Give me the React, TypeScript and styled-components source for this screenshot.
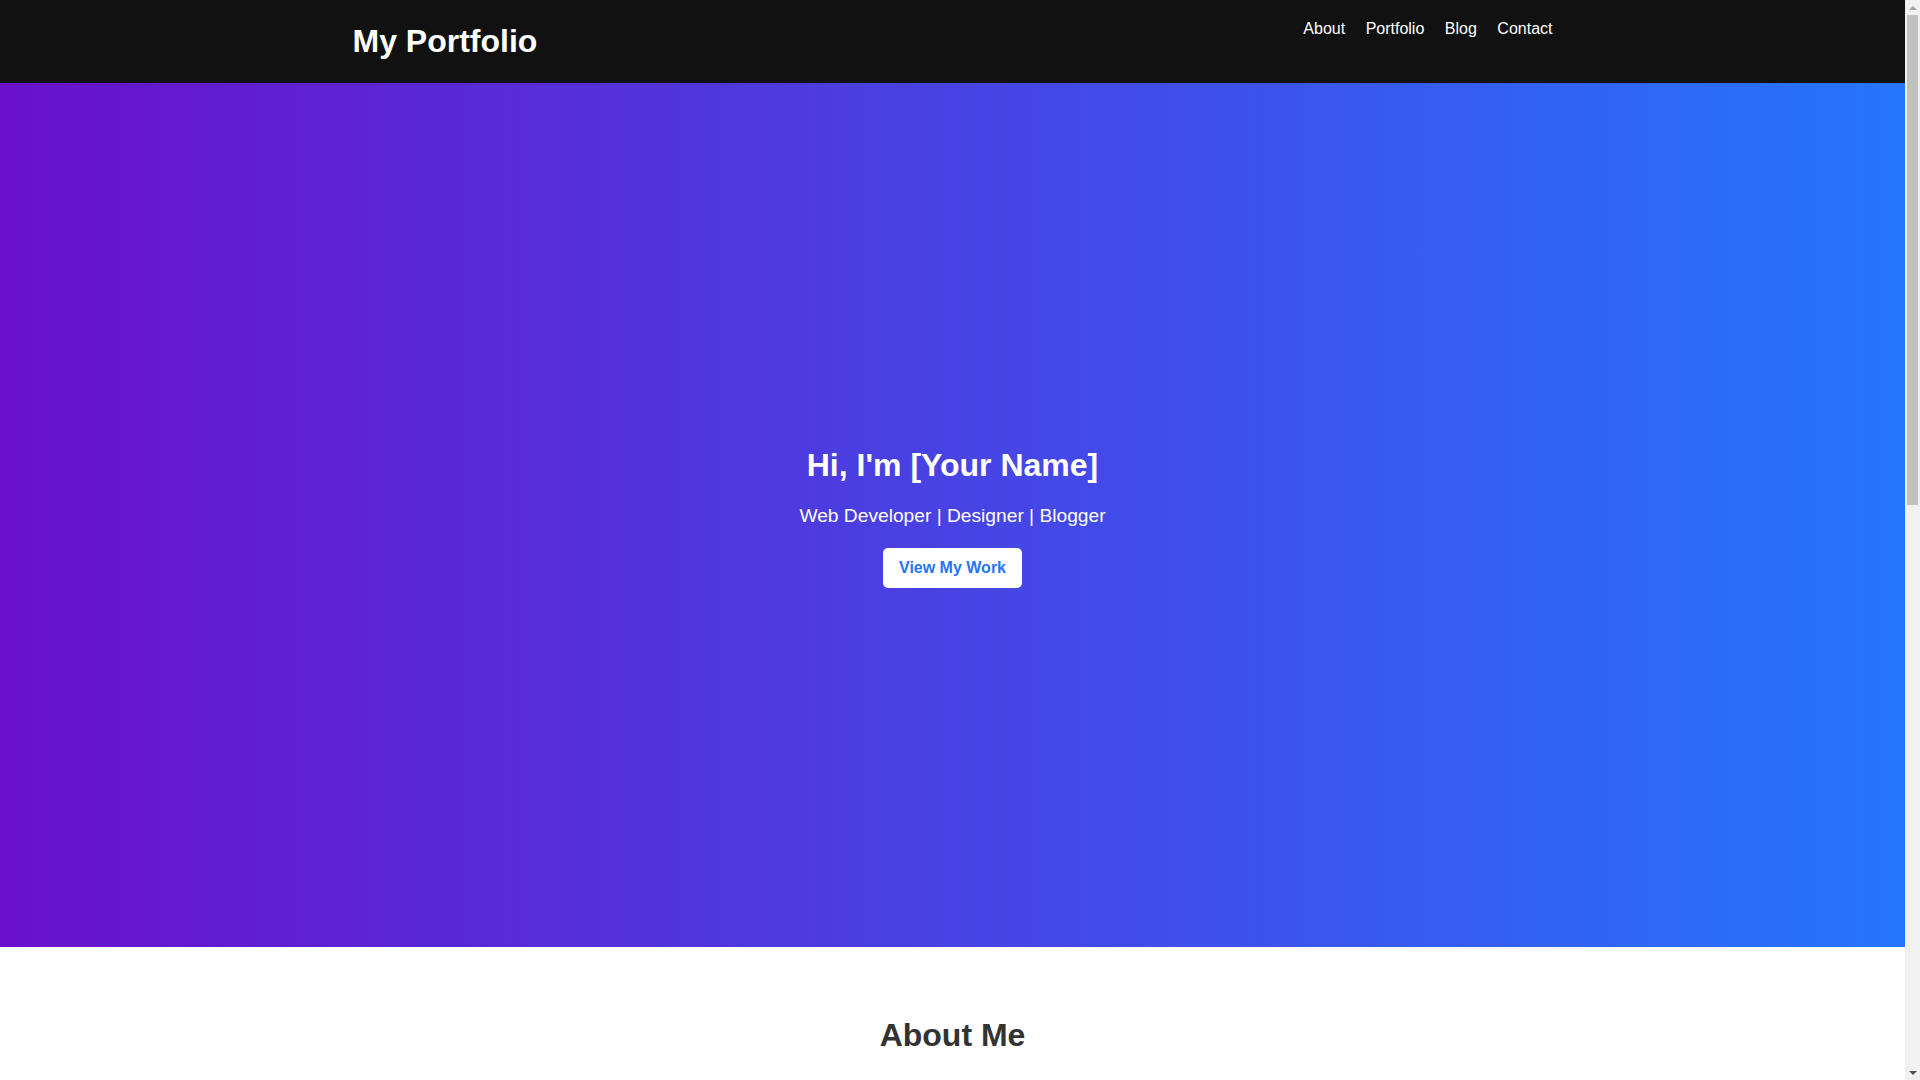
import React from 'react';
import styled, { createGlobalStyle } from 'styled-components';

const GlobalStyle = createGlobalStyle`
  body {
    margin: 0 15px 0 0;
    font-family: 'Liberation Sans', Arial, sans-serif;
    color: #333;
    background: #fff;
  }
`;

/* fake classic scrollbar, the reference was shot with one */
const ScrollBar = styled.div`
	position: fixed;
	top: 0;
	right: 0;
	width: 15px;
	height: 100vh;
	background: #f1f1f1;
	display: flex;
	flex-direction: column;
	align-items: center;
	z-index: 10;
`;

const ArrowBox = styled.div`
	height: 15px;
	width: 15px;
	display: flex;
	align-items: center;
	justify-content: center;
`;

const Arrow = styled.div<{ dir: 'up' | 'down' }>`
	width: 0;
	height: 0;
	border-left: 4px solid transparent;
	border-right: 4px solid transparent;
	${(p) =>
		p.dir === 'up' ? 'border-bottom: 4px solid #a3a3a3;' : 'border-top: 4px solid #505050;'}
`;

const ScrollThumb = styled.div`
	width: 11px;
	height: 490px;
	background: #c1c1c1;
`;

const ScrollTrack = styled.div`
	flex: 1;
`;

const Header = styled.header`
	background: #111;
	color: #fff;
	height: 83px;
`;

const Container = styled.div`
	max-width: 1200px;
	margin: 0 auto;
	display: flex;
	justify-content: space-between;
	align-items: flex-start;
`;

const Logo = styled.h1`
	margin: 23px 0 0;
	font-size: 32px;
	font-weight: bold;
	line-height: normal;
`;

const NavList = styled.ul`
	list-style: none;
	display: flex;
	gap: 20.5px;
	margin: 19.5px 0 0;
	padding: 0;
`;

const NavLink = styled.a`
	color: #fff;
	text-decoration: none;
	font-size: 16px;
`;

const Hero = styled.section`
	height: 80vh;
	background: linear-gradient(to right, #6a11cb, #2575fc);
	color: #fff;
	display: flex;
	flex-direction: column;
	align-items: center;
	justify-content: center;
	text-align: center;
	padding-top: 5px;
	box-sizing: border-box;
`;

const HeroTitle = styled.h1`
	font-size: 32px;
	margin: 0 0 21px;
`;

const HeroSubtitle = styled.p`
	font-size: 1.2em;
	margin: 0 0 21px;
`;

const Button = styled.a`
	display: inline-block;
	background: #fff;
	color: #2575fc;
	font-weight: bold;
	font-size: 16px;
	padding: 0.7rem 1rem;
	border-radius: 5px;
	text-decoration: none;
`;

const Section = styled.section<{ alt?: boolean }>`
	padding: 50px 20px;
	text-align: center;
	background: ${(p) => (p.alt ? '#f4f4f4' : '#fff')};
`;

const SectionTitle = styled.h2`
	font-size: 2rem;
	margin: 20px 0 20px;
	color: #333;
`;

const Text = styled.p`
	max-width: 800px;
	margin: 0 auto;
	line-height: 1.6;
`;

const Grid = styled.div`
	max-width: 1200px;
	margin: 0 auto;
	display: grid;
	grid-template-columns: repeat(3, 1fr);
	gap: 20px;
`;

const Card = styled.div`
	background: #fff;
	border-radius: 5px;
	box-shadow: 0 2px 6px rgba(0, 0, 0, 0.1);
	padding: 20px;
	text-align: left;
`;

const Thumb = styled.div`
	height: 160px;
	background: #ddd;
	border-radius: 4px;
	margin-bottom: 15px;
`;

const CardTitle = styled.h3`
	margin: 0 0 10px;
`;

const Form = styled.form`
	max-width: 600px;
	margin: 0 auto;
	display: flex;
	flex-direction: column;
	gap: 10px;
`;

const Input = styled.input`
	padding: 10px;
	border: 1px solid #ccc;
	border-radius: 4px;
	font-family: inherit;
`;

const Footer = styled.footer`
	background: #111;
	color: #fff;
	text-align: center;
	padding: 20px;
`;

const projects = ['Project One', 'Project Two', 'Project Three'];

const App = () => {
	return (
		<>
			<GlobalStyle />
			<Header>
				<Container>
					<Logo>My Portfolio</Logo>
					<nav>
						<NavList>
							<li><NavLink href="#about">About</NavLink></li>
							<li><NavLink href="#portfolio">Portfolio</NavLink></li>
							<li><NavLink href="#blog">Blog</NavLink></li>
							<li><NavLink href="#contact">Contact</NavLink></li>
						</NavList>
					</nav>
				</Container>
			</Header>

			<Hero>
				<HeroTitle>Hi, I'm [Your Name]</HeroTitle>
				<HeroSubtitle>Web Developer | Designer | Blogger</HeroSubtitle>
				<Button href="#portfolio">View My Work</Button>
			</Hero>

			<Section id="about">
				<SectionTitle>About Me</SectionTitle>
				<Text>
					I'm a passionate web developer and designer who loves building clean, responsive websites
					and writing about technology, design and everything in between.
				</Text>
			</Section>

			<Section id="portfolio" alt>
				<SectionTitle>Portfolio</SectionTitle>
				<Grid>
					{projects.map((p) => (
						<Card key={p}>
							<Thumb />
							<CardTitle>{p}</CardTitle>
							<p>A short description of the project.</p>
						</Card>
					))}
				</Grid>
			</Section>

			<Section id="blog">
				<SectionTitle>Blog</SectionTitle>
				<Text>Latest posts coming soon.</Text>
			</Section>

			<Section id="contact" alt>
				<SectionTitle>Contact</SectionTitle>
				<Form>
					<Input placeholder="Your Name" />
					<Input placeholder="Your Email" />
					<Input placeholder="Message" />
				</Form>
			</Section>

			<Footer>© 2024 My Portfolio. All rights reserved.</Footer>

			<ScrollBar>
				<ArrowBox><Arrow dir="up" /></ArrowBox>
				<ScrollThumb />
				<ScrollTrack />
				<ArrowBox><Arrow dir="down" /></ArrowBox>
			</ScrollBar>
		</>
	);
};

export default App;
